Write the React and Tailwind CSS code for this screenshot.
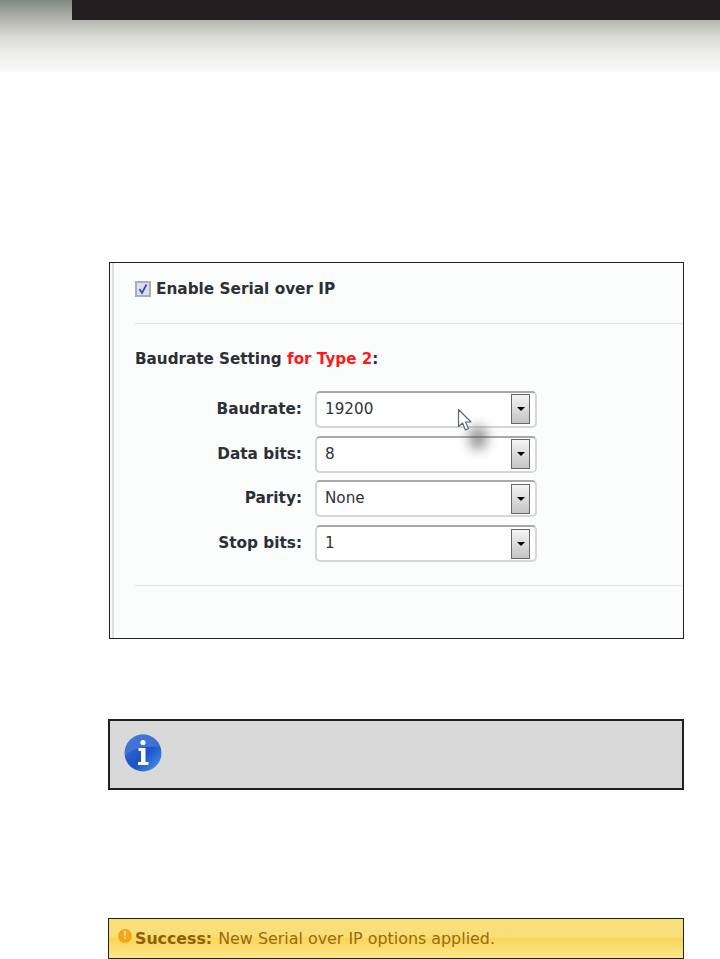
import React from 'react';

const rows = [
  { label: 'Baudrate:', value: '19200' },
  { label: 'Data bits:', value: '8' },
  { label: 'Parity:', value: 'None' },
  { label: 'Stop bits:', value: '1' },
];

const SelectRow = ({ label, value, children }) => (
  <div className="flex h-[37px] items-center">
    <div className="w-[167px] text-right text-[15.3px] font-bold text-[#2b2f36]">{label}</div>
    <div className="relative ml-[13px] flex h-[37px] w-[222px] items-center justify-between rounded-[5px] border-2 border-[#d6d6d6] border-t-[#a8a8a8] bg-white pl-[8px] pr-[5px] text-[15.2px] text-[#30343a]">
      <span>{value}</span>
      <div className="flex h-[30px] w-[19px] items-center justify-center border border-[#666] bg-gradient-to-b from-[#f4f4f4] to-[#c4c4c4]">
        <div className="h-0 w-0 border-x-[4px] border-t-[4px] border-x-transparent border-t-black" />
      </div>
      {children}
    </div>
  </div>
);

const Cursor = () => (
  <>
    <div className="absolute left-[152px] top-[33px] z-10 h-[24px] w-[18px] rounded-full bg-[#555] opacity-60 blur-[6px]" />
    <svg className="absolute left-[140px] top-[15px] z-10" width="17" height="24" viewBox="0 0 17 24">
      <path d="M1.5 1.5 L1.5 18.5 L5.5 15 L8.5 22 L11.5 20.5 L8.5 14 L14 14 Z" fill="#fff" stroke="#5c6670" strokeWidth="1.2" strokeLinejoin="round" />
    </svg>
  </>
);

const InfoIcon = () => (
  <svg width="38" height="38" viewBox="0 0 38 38">
    <defs>
      <linearGradient id="infoBase" x1="0" y1="0" x2="1" y2="1">
        <stop offset="0" stopColor="#3f74d2" />
        <stop offset="0.55" stopColor="#1a52c8" />
        <stop offset="1" stopColor="#4f9cf0" />
      </linearGradient>
    </defs>
    <circle cx="19" cy="19" r="18.5" fill="url(#infoBase)" />
    <path d="M1 22 C8 14 20 12 36 13 C33 5 26 .5 19 .5 C9 .5 .5 9 1 22 Z" fill="#4a7bd4" opacity="0.75" />
    <circle cx="19" cy="8.5" r="2.6" fill="#fff" />
    <path d="M14.5 14 H21.5 V28 H24.5 V31 H14 V28 H17 V17 H14.5 Z" fill="#fff" />
  </svg>
);

export default function App() {
  return (
    <div className="min-h-[959px] bg-white font-['DejaVu_Sans',sans-serif]">
      <header className="h-[72px] bg-[linear-gradient(to_bottom,#7d8980_0%,#b6b7af_28%,#d9d9d5_50%,#eeeeec_75%,#f9f9f9_100%)]">
        <div className="ml-[72px] h-[20px] bg-[#231f20]" />
      </header>

      <main className="ml-[108px] w-[576px]">
        <section className="mt-[190px] ml-[1px] h-[377px] overflow-hidden border border-[#231f20] bg-[#fbfdfd]">
          <div className="ml-[2px] h-full border-l-2 border-[#dcdede] pl-[21px]">
            <div className="flex items-center pt-[15px]">
              <div className="flex h-[16px] w-[16px] items-center justify-center border-2 border-[#adadb6] bg-[#d9def2]">
                <svg width="12" height="12" viewBox="0 0 12 12">
                  <path d="M2.5 6 L5 10 L9.5 1.5" fill="none" stroke="#3f4fa8" strokeWidth="1.8" />
                </svg>
              </div>
              <span className="ml-[5px] text-[15.3px] font-bold text-[#2b2f36]">Enable Serial over IP</span>
            </div>

            <div className="mt-[22px] h-[1px] bg-[#e2e4e4]" />

            <div className="mt-[24px] text-[15.2px] font-bold text-[#2b2f36]">
              Baudrate Setting <span className="text-[#ff1a1a]">for Type 2</span>:
            </div>

            <div className="mt-[20px] flex flex-col gap-[7.8px]">
              {rows.map((row, i) => (
                <SelectRow key={row.label} label={row.label} value={row.value}>
                  {i === 0 && <Cursor />}
                </SelectRow>
              ))}
            </div>

            <div className="mt-[23px] h-[1px] bg-[#e2e4e4]" />
          </div>
        </section>

        <section className="mt-[80px] flex h-[71px] items-center border-2 border-[#231f20] bg-[#d9d9d9] pb-[3px] pl-[14px]">
          <InfoIcon />
        </section>

        <section className="mt-[128px] flex h-[41px] items-center border border-[#231f20] bg-[linear-gradient(to_bottom,#f7e17c_0%,#f7df76_46%,#f8d656_50%,#f9dd6c_70%,#fae58a_100%)] pl-[9px] text-[#9a6a10]">
          <div className="mb-[5px] flex h-[14px] w-[14px] items-center justify-center rounded-full bg-[#f5a516] text-[10px] font-bold leading-none text-[#fbe9a8]">!</div>
          <span className="ml-[3px] text-[15.8px] font-bold text-[#8f5f0c]">Success:</span>
          <span className="ml-[6px] text-[15.9px]">New Serial over IP options applied.</span>
        </section>
      </main>
    </div>
  );
}
